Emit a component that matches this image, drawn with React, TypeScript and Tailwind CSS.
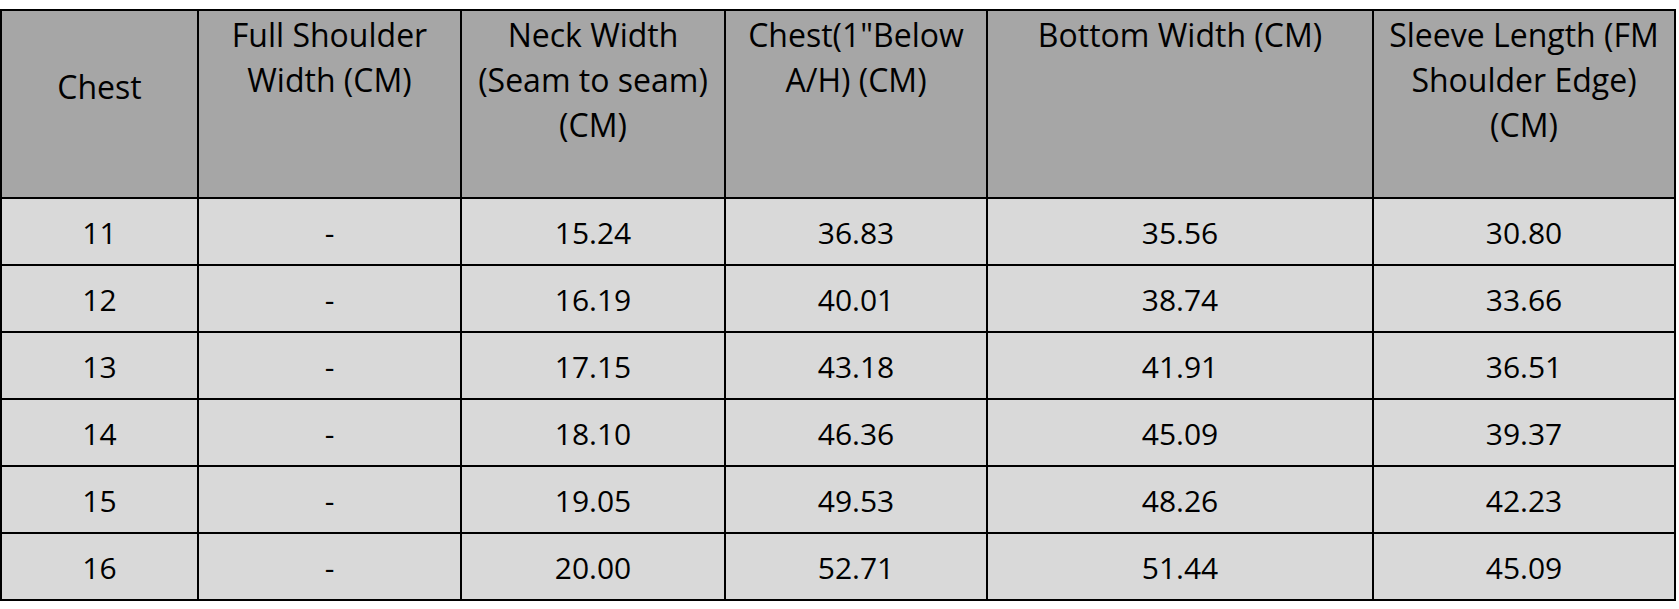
const headers = [
  "Chest",
  "Full Shoulder Width (CM)",
  "Neck Width (Seam to seam) (CM)",
  "Chest(1\"Below A/H) (CM)",
  "Bottom Width (CM)",
  "Sleeve Length (FM Shoulder Edge) (CM)",
];

const headerLines: string[][] = [
  ["Chest"],
  ["Full Shoulder", "Width (CM)"],
  ["Neck Width", "(Seam to seam)", "(CM)"],
  ["Chest(1\"Below", "A/H) (CM)"],
  ["Bottom Width (CM)"],
  ["Sleeve Length (FM", "Shoulder Edge)", "(CM)"],
];

const rows = [
  ["11", "-", "15.24", "36.83", "35.56", "30.80"],
  ["12", "-", "16.19", "40.01", "38.74", "33.66"],
  ["13", "-", "17.15", "43.18", "41.91", "36.51"],
  ["14", "-", "18.10", "46.36", "45.09", "39.37"],
  ["15", "-", "19.05", "49.53", "48.26", "42.23"],
  ["16", "-", "20.00", "52.71", "51.44", "45.09"],
];

function SizeChart() {
  return (
    <div className="mt-[9px] grid w-[1676px] grid-cols-[195px_261px_262px_260px_384px_300px] grid-rows-[186px_repeat(6,65px)] gap-[2px] border-2 border-black bg-black font-['Open_Sans',sans-serif] text-black">
      {headerLines.map((lines, i) => (
        <div
          key={headers[i]}
          className={
            i === 0
              ? "bg-[#a6a6a6] pt-[53px] text-center text-[32px] leading-[45px]"
              : "bg-[#a6a6a6] pt-[1px] text-center text-[32px] leading-[45px]"
          }
        >
          {lines.map((line) => (
            <div key={line}>{line}</div>
          ))}
        </div>
      ))}
      {rows.map((row) =>
        row.map((cell, j) => (
          <div
            key={row[0] + "-" + j}
            className="flex items-center justify-center bg-[#d9d9d9] pt-[2px] text-[30px]"
          >
            {cell}
          </div>
        ))
      )}
    </div>
  );
}

export default function App() {
  return (
    <div className="min-h-[609px] w-[1679px] bg-white">
      <SizeChart />
    </div>
  );
}
